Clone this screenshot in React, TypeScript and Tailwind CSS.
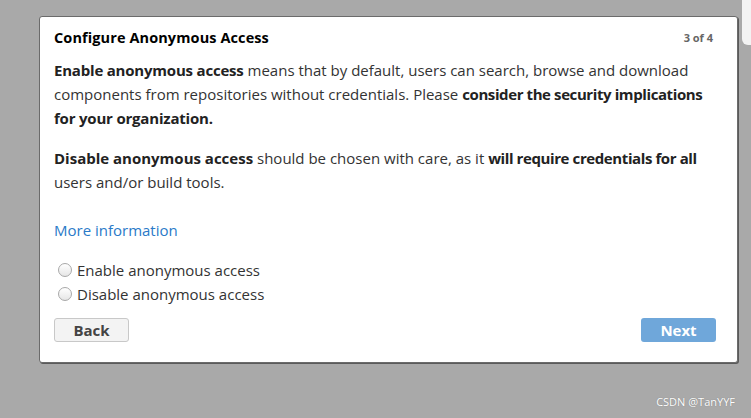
export default function App() {
  return (
    <div
      className="relative w-[751px] h-[418px] overflow-hidden bg-[#a9a9a9]"
      style={{ fontFamily: "'Open Sans', Lato, sans-serif" }}
    >
      {/* sliver of a panel behind, top right */}
      <div className="absolute right-0 top-0 w-[9px] h-[45px] bg-[#f3f3f3] rounded-bl-[6px]" />

      <div className="ml-[39px] mt-[16px] w-[699px] h-[347px] bg-white border border-[#6b6b6b] rounded-[3px] shadow-[1px_1px_0_#5a5a5a] flex flex-col pl-[14px] pr-[21px] pt-[11px] pb-[20px]">
        <div className="flex items-center justify-between h-[20px]">
          <h1 className="text-[14.5px] font-bold text-black tracking-[0.1px]">Configure Anonymous Access</h1>
          <span className="text-[11px] font-bold text-[#666] mr-[3px]">3 of 4</span>
        </div>

        <p className="mt-[10px] text-[15px] leading-[24px] text-[#333] whitespace-nowrap">
          <b className="text-[#222] tracking-[-0.2px]">Enable anonymous access</b> means that by default, users can search, browse and download
          <br />
          components from repositories without credentials. Please{" "}
          <b className="text-[#222] tracking-[-0.4px]">consider the security implications</b>
          <br />
          <b className="text-[#222] tracking-[-0.2px]">for your organization.</b>
        </p>

        <p className="mt-[16px] text-[15px] leading-[24px] text-[#333] whitespace-nowrap">
          <b className="text-[#222]">Disable anonymous access</b> should be chosen with care, as it{" "}
          <b className="text-[#222] tracking-[-0.4px]">will require credentials for all</b>
          <br />
          users and/or build tools.
        </p>

        <a className="mt-[24px] text-[15px] leading-[24px] text-[#2a7ac8] w-fit">More information</a>

        <div className="mt-[16px] flex flex-col pl-[4px]">
          {["Enable anonymous access", "Disable anonymous access"].map((label) => (
            <label key={label} className="flex items-center h-[24px] text-[15px] text-[#333]">
              <span className="w-[14px] h-[14px] rounded-full border border-[#a8a8a8] bg-gradient-to-b from-white to-[#e6e6e6] mr-[5px]" />
              {label}
            </label>
          ))}
        </div>

        <div className="mt-auto flex justify-between">
          <button className="w-[75px] h-[24px] rounded-[3px] border border-[#c8c8c8] bg-[#f3f3f3] text-[15px] font-bold text-[#444]">
            Back
          </button>
          <button className="w-[75px] h-[24px] rounded-[3px] bg-[#6fa7da] text-[15px] font-bold text-white">
            Next
          </button>
        </div>
      </div>

      <div className="absolute right-[16px] bottom-[8px] text-[11px] text-white [text-shadow:0_0_1px_#777]">
        CSDN @TanYYF
      </div>
    </div>
  );
}
